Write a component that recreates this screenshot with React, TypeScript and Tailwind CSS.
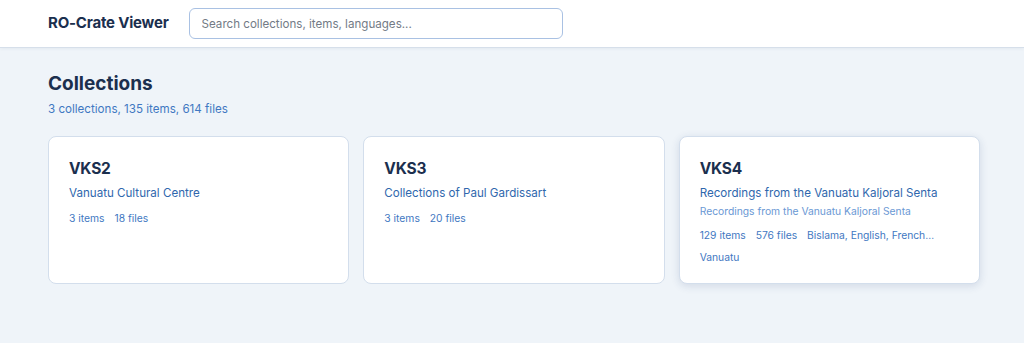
import React from 'react';

interface Collection {
  id: string;
  name: string;
  description?: string;
  items: number;
  files: number;
  languages?: string;
  country?: string;
  hovered?: boolean;
}

const collections: Collection[] = [
  { id: 'VKS2', name: 'Vanuatu Cultural Centre', items: 3, files: 18 },
  { id: 'VKS3', name: 'Collections of Paul Gardissart', items: 3, files: 20 },
  {
    id: 'VKS4',
    name: 'Recordings from the Vanuatu Kaljoral Senta',
    description: 'Recordings from the Vanuatu Kaljoral Senta',
    items: 129,
    files: 576,
    languages: 'Bislama, English, French…',
    country: 'Vanuatu',
    hovered: true
  }
];

const CollectionCard: React.FC<{ c: Collection }> = ({ c }) => (
  <div
    className={`bg-white rounded-lg border border-[#d3deec] px-5 pt-[22px] pb-[19px] ${
      c.hovered ? 'shadow-[0_2px_8px_rgba(30,60,110,0.14)]' : ''
    }`}
  >
    <h2 className="text-[15.5px] leading-5 font-bold text-[#1b2f4e] tracking-[-0.2px]">{c.id}</h2>
    <p className="mt-[6px] text-[11.6px] leading-4 text-[#2f67ad]">{c.name}</p>
    {c.description && (
      <p className="mt-[3px] text-[10.3px] leading-[14px] text-[#6a98d4]">{c.description}</p>
    )}
    <div className="mt-[10px] flex gap-[10px] text-[10.3px] leading-[14px] text-[#3f78c2]">
      <span>{c.items} items</span>
      <span>{c.files} files</span>
      {c.languages && <span>{c.languages}</span>}
    </div>
    {c.country && (
      <div className="mt-[8px] text-[10.3px] leading-[14px] text-[#3f78c2]">{c.country}</div>
    )}
  </div>
);

export default function App() {
  return (
    <div className="min-h-[343px] bg-[#eff4f9] font-['Inter',sans-serif]">
      {/* Header */}
      <header className="h-12 bg-white border-b border-[#d6dfea] shadow-[0_1px_3px_rgba(30,60,110,0.06)] flex items-center pl-12 gap-5">
        <h1 className="text-[15px] font-bold text-[#1b2f4e] tracking-[-0.2px]">RO-Crate Viewer</h1>
        <input
          type="text"
          placeholder="Search collections, items, languages..."
          className="w-[374px] h-[31px] rounded-md border border-[#a9c1e3] px-3 text-[11.6px] text-[#1b2f4e] placeholder:text-[#737b86] outline-none"
        />
      </header>

      {/* Collections */}
      <main className="pl-12 pt-[22px]">
        <h1 className="text-[19px] leading-7 font-bold text-[#1b2f4e]">Collections</h1>
        <p className="mt-[3px] text-[11.6px] leading-4 text-[#3f78c2]">3 collections, 135 items, 614 files</p>
        <div className="mt-[19px] w-[932px] grid grid-cols-3 gap-[14px]">
          {collections.map((c) => (
            <CollectionCard key={c.id} c={c} />
          ))}
        </div>
      </main>
    </div>
  );
}
